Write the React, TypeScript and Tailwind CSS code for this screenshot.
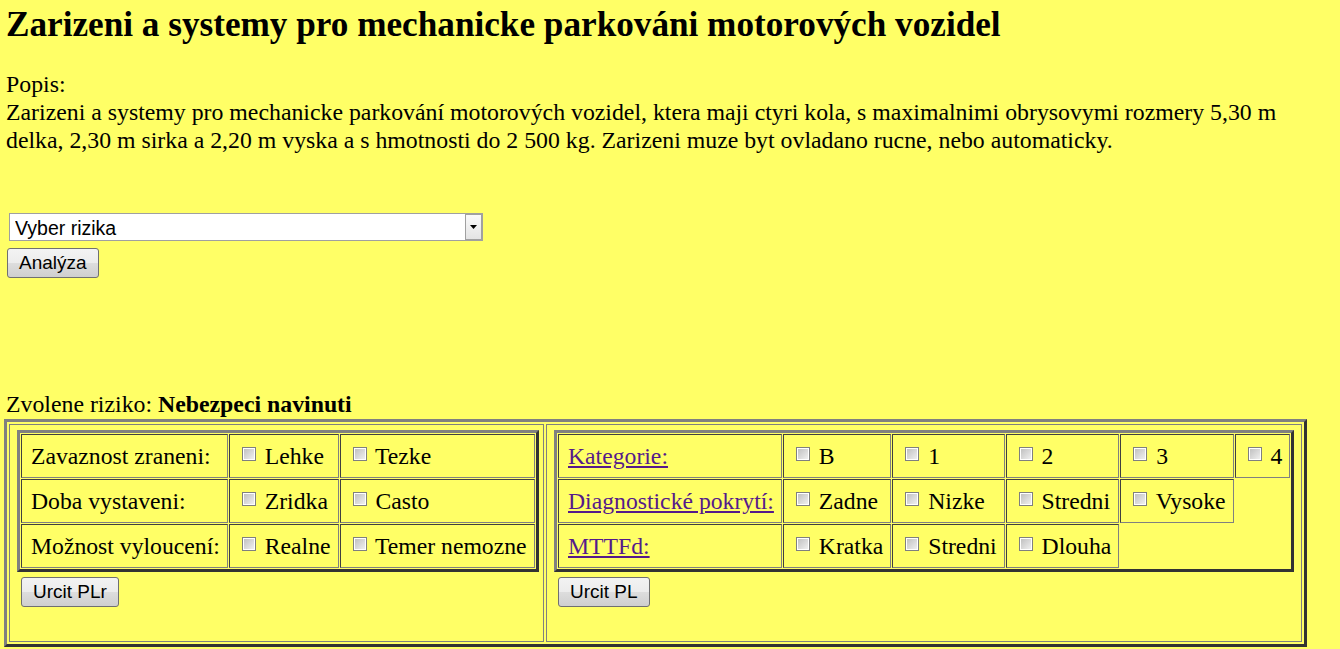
import React from "react"

const cell =
  "border border-t-[#404040] border-l-[#404040] border-b-[#808080] border-r-[#808080] pl-[9px] pr-[7px] py-[7px] leading-[28px] whitespace-nowrap align-middle"

const outerCell =
  "border border-t-[#808080] border-l-[#808080] border-b-[#808080] border-r-[#808080] pl-[7px] pr-[2px] pt-[5px] align-top"

const tableBorder =
  "border-[3px] border-t-[#808080] border-l-[#808080] border-b-[#333333] border-r-[#333333]"

function Check({ label }: { label: string }) {
  return (
    <>
      <input
        type="checkbox"
        className="appearance-none m-[3px] w-[14px] h-[14px] border border-[#7f7f7f] bg-[linear-gradient(135deg,#bcbcbc,#f4f4f4)] shadow-[inset_0_0_0_1px_#ffffff]"
      />{" "}
      {label}
    </>
  )
}

function IeButton({ children }: { children: React.ReactNode }) {
  return (
    <button
      type="button"
      className="h-[30px] px-[11px] rounded-[3px] border border-[#707070] bg-[linear-gradient(#f3f3f3_0%,#ececec_50%,#dddddd_51%,#cfcfcf_100%)] font-['Liberation_Sans',Arial,sans-serif] text-[19px] leading-[28px] text-black"
    >
      {children}
    </button>
  )
}

function LinkLabel({ children }: { children: React.ReactNode }) {
  return (
    <a href="#" className="text-[#551a8b] underline">
      {children}
    </a>
  )
}

export default function App() {
  return (
    <div className="min-h-screen bg-[#ffff66] px-[4px] pt-[5px] pb-[10px] font-['Liberation_Serif','Times_New_Roman',serif] text-black">
      <h1 className="ml-[2px] text-[35.2px] leading-[40px] font-bold">
        Zarizeni a systemy pro mechanicke parkováni motorových vozidel
      </h1>

      <p className="ml-[2px] mt-[25px] pr-[20px] text-[23.8px] leading-[28px]">
        Popis:
        <br />
        Zarizeni a systemy pro mechanicke parkování motorových vozidel, ktera maji ctyri kola, s maximalnimi obrysovymi
        rozmery 5,30 m delka, 2,30 m sirka a 2,20 m vyska a s hmotnosti do 2 500 kg. Zarizeni muze byt ovladano rucne, nebo
        automaticky.
      </p>

      <div className="relative ml-[5px] mt-[59px] w-[474px] h-[28px]">
        <select className="appearance-none w-full h-full border border-[#a0a0a0] bg-white pl-[5px] font-['Liberation_Sans',Arial,sans-serif] text-[19.5px] text-black outline-none">
          <option>Vyber rizika</option>
        </select>
        <span className="pointer-events-none absolute right-[1px] top-[1px] w-[17px] h-[26px] border border-[#a0a0a0] bg-[linear-gradient(#fafafa,#e4e4e4)] flex items-center justify-center">
          <svg width="7" height="4" viewBox="0 0 7 4">
            <path d="M0 0h7L3.5 4z" fill="#000" />
          </svg>
        </span>
      </div>

      <div className="ml-[3px] mt-[7px]">
        <IeButton>Analýza</IeButton>
      </div>

      <p className="ml-[2px] mt-[112px] text-[23.8px] leading-[28px]">
        Zvolene riziko: <b>Nebezpeci navinuti</b>
      </p>

      <table className={`mt-[1px] w-[1303px] h-[228px] border-separate border-spacing-[2px] ${tableBorder}`}>
        <tbody>
          <tr>
            <td className={`${outerCell} w-[535px]`}>
              <table className={`border-separate border-spacing-[1px] text-[23.7px] ${tableBorder}`}>
                <tbody>
                  <tr>
                    <td className={cell}>Zavaznost zraneni:</td>
                    <td className={cell}>
                      <Check label="Lehke" />
                    </td>
                    <td className={cell}>
                      <Check label="Tezke" />
                    </td>
                  </tr>
                  <tr>
                    <td className={cell}>Doba vystaveni:</td>
                    <td className={cell}>
                      <Check label="Zridka" />
                    </td>
                    <td className={cell}>
                      <Check label="Casto" />
                    </td>
                  </tr>
                  <tr>
                    <td className={cell}>Možnost vyloucení:</td>
                    <td className={cell}>
                      <Check label="Realne" />
                    </td>
                    <td className={cell}>
                      <Check label="Temer nemozne" />
                    </td>
                  </tr>
                </tbody>
              </table>
              <div className="ml-[4px] mt-[5px]">
                <IeButton>Urcit PLr</IeButton>
              </div>
            </td>

            <td className={outerCell}>
              <table className={`border-separate border-spacing-[1px] text-[23.7px] ${tableBorder}`}>
                <tbody>
                  <tr>
                    <td className={cell}>
                      <LinkLabel>Kategorie:</LinkLabel>
                    </td>
                    <td className={cell}>
                      <Check label="B" />
                    </td>
                    <td className={cell}>
                      <Check label="1" />
                    </td>
                    <td className={cell}>
                      <Check label="2" />
                    </td>
                    <td className={cell}>
                      <Check label="3" />
                    </td>
                    <td className={cell}>
                      <Check label="4" />
                    </td>
                  </tr>
                  <tr>
                    <td className={cell}>
                      <LinkLabel>Diagnostické pokrytí:</LinkLabel>
                    </td>
                    <td className={cell}>
                      <Check label="Zadne" />
                    </td>
                    <td className={cell}>
                      <Check label="Nizke" />
                    </td>
                    <td className={cell}>
                      <Check label="Stredni" />
                    </td>
                    <td className={cell}>
                      <Check label="Vysoke" />
                    </td>
                  </tr>
                  <tr>
                    <td className={cell}>
                      <LinkLabel>MTTFd:</LinkLabel>
                    </td>
                    <td className={cell}>
                      <Check label="Kratka" />
                    </td>
                    <td className={cell}>
                      <Check label="Stredni" />
                    </td>
                    <td className={cell}>
                      <Check label="Dlouha" />
                    </td>
                  </tr>
                </tbody>
              </table>
              <div className="ml-[4px] mt-[5px]">
                <IeButton>Urcit PL</IeButton>
              </div>
            </td>
          </tr>
        </tbody>
      </table>
    </div>
  )
}
